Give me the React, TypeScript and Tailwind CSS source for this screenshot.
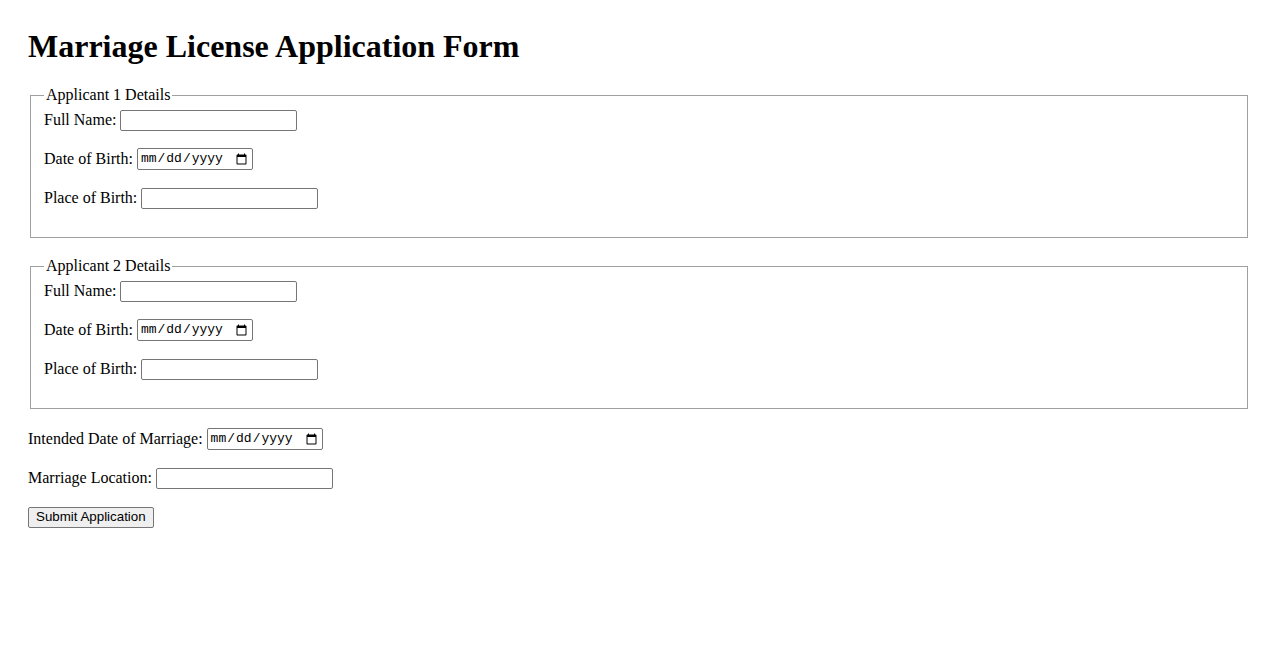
import React from "react";

const inputCls =
  "h-[21px] w-[177px] rounded-[2px] border border-[#767676] bg-white px-[2px] text-[13.33px] [font-family:'Liberation_Sans',Arial,sans-serif]";
const dateCls =
  "h-[22px] w-[116px] rounded-[2px] border border-[#767676] bg-white px-[2px] text-[13px] [font-family:'Liberation_Mono',monospace]";

const Row: React.FC<{ label: string; type?: "text" | "date" }> = ({
  label,
  type = "text",
}) => (
  <div className="mb-[15px] flex h-[24px] items-center gap-[4px]">
    <label>{label}</label>
    {type === "date" ? (
      <input type="date" className={dateCls} />
    ) : (
      <input type="text" className={inputCls} />
    )}
  </div>
);

const Applicant: React.FC<{ n: number }> = ({ n }) => (
  <fieldset className="mx-[2px] border border-[#a0a0a0] px-[13px] pb-[12px] pt-[4px]">
    <legend className="px-[2px] leading-[18px]">Applicant {n} Details</legend>
    <Row label="Full Name:" />
    <Row label="Date of Birth:" type="date" />
    <Row label="Place of Birth:" />
  </fieldset>
);

export default function App() {
  return (
    <div className="min-h-[650px] bg-white px-[28px] pt-[28px] text-[16px] text-black [font-family:'Liberation_Serif','Times_New_Roman',serif]">
      <h1 className="mb-[21px] text-[32px] font-bold leading-[37px]">
        Marriage License Application Form
      </h1>
      <form onSubmit={(e) => e.preventDefault()}>
        <div className="mb-[19px]">
          <Applicant n={1} />
        </div>
        <Applicant n={2} />
        <div className="mt-[18px]">
          <Row label="Intended Date of Marriage:" type="date" />
          <Row label="Marriage Location:" />
          <div className="flex h-[24px] items-center">
            <button
              type="submit"
              className="h-[21px] rounded-[2px] border border-[#767676] bg-[#efefef] px-[7px] text-[13.33px] leading-none text-black [font-family:'Liberation_Sans',Arial,sans-serif]"
            >
              Submit Application
            </button>
          </div>
        </div>
      </form>
    </div>
  );
}
